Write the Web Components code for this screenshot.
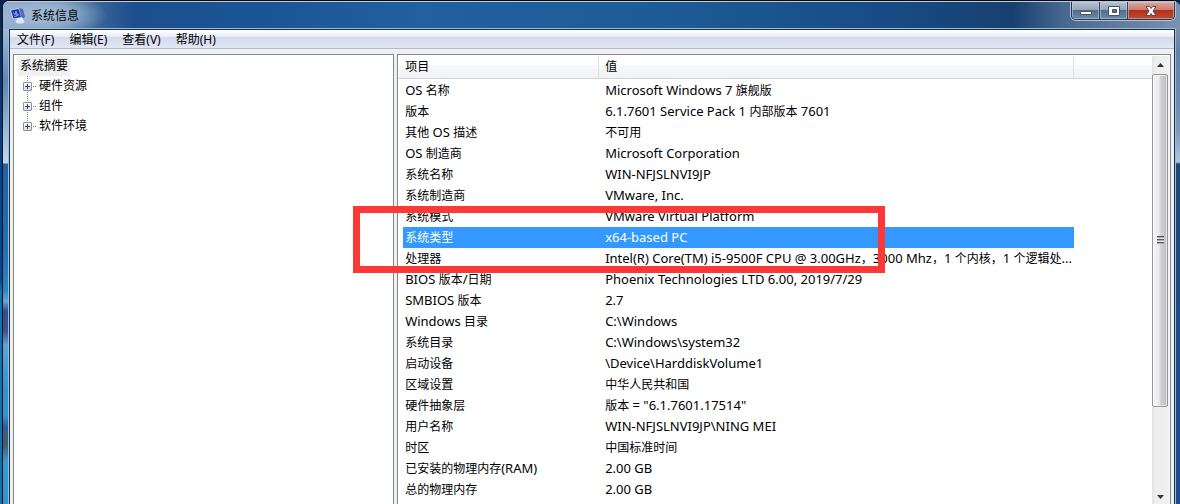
<!DOCTYPE html>
<html lang="zh-CN">
<head>
<meta charset="utf-8">
<title>系统信息</title>
<style>
  html, body {
    height: 100%;
  }

  body {
    margin: 0;
    overflow: hidden;
    position: relative;
    color: #000;
    font: 12px/20px "Noto Sans", "Noto Sans CJK SC", sans-serif;
    background: linear-gradient(#0a2248 0, #0b3d78 120px, #04488c 200px, #04488c 280px, #1273a4 290px, #1273a4 100%);
  }
</style>
</head>
<body>
<app-window>
  <span slot="title">系统信息</span>
  <menu-bar slot="menu">
    <menu-entry>文件(F)</menu-entry>
    <menu-entry>编辑(E)</menu-entry>
    <menu-entry>查看(V)</menu-entry>
    <menu-entry>帮助(H)</menu-entry>
  </menu-bar>
  <tree-view>
    <span slot="root">系统摘要</span>
    <tree-item>硬件资源</tree-item>
    <tree-item>组件</tree-item>
    <tree-item>软件环境</tree-item>
  </tree-view>
  <info-list></info-list>
</app-window>
<mark-box></mark-box>

<script>
const rows = [
  ['OS 名称', 'Microsoft Windows 7 旗舰版'],
  ['版本', '6.1.7601 Service Pack 1 内部版本 7601'],
  ['其他 OS 描述', '不可用'],
  ['OS 制造商', 'Microsoft Corporation'],
  ['系统名称', 'WIN-NFJSLNVI9JP'],
  ['系统制造商', 'VMware, Inc.'],
  ['系统模式', 'VMware Virtual Platform'],
  ['系统类型', 'x64-based PC'],
  ['处理器', 'Intel(R) Core(TM) i5-9500F CPU @ 3.00GHz，3000 Mhz，1 个内核，1 个逻辑处...'],
  ['BIOS 版本/日期', 'Phoenix Technologies LTD 6.00, 2019/7/29'],
  ['SMBIOS 版本', '2.7'],
  ['Windows 目录', 'C:\\Windows'],
  ['系统目录', 'C:\\Windows\\system32'],
  ['启动设备', '\\Device\\HarddiskVolume1'],
  ['区域设置', '中华人民共和国'],
  ['硬件抽象层', '版本 = "6.1.7601.17514"'],
  ['用户名称', 'WIN-NFJSLNVI9JP\\NING MEI'],
  ['时区', '中国标准时间'],
  ['已安装的物理内存(RAM)', '2.00 GB'],
  ['总的物理内存', '2.00 GB'],
];
const selectedRow = 7;

class AppWindow extends HTMLElement {
  constructor() {
    super();
    this.attachShadow({ mode: 'open' });
    this.shadowRoot.innerHTML = /* html */`
    <style>
    :host {
      display: flex;
      flex-direction: column;
      box-sizing: border-box;
      height: 100%;
      margin-left: 2px;
      border-top: 1px solid #05070f;
      border-left: 1px solid #0a1424;
      border-radius: 7px 7px 0 0;
      overflow: hidden;
      background:
        linear-gradient(#b8cfe4 0, #8fb0d0 40px, #5d86b4 80px, #8fb0d2 120px, #c3d8ec 162px, #2062a4 163px,
          #2272b0 250px, #2a86c4 290px, #66a8dc 300px, #2d4f94 310px, #434f8c 330px, #5aa4da 344px,
          #3094cc 390px, #2f96cf 415px, #2f5fa0 425px, #455a68 443px, #3a9ace 460px, #2f96cf) left / 50% 100% no-repeat,
        linear-gradient(#8ba0b8 0, #6483ab 50px, #7089b0 100px, #7f98bd 130px, #b5c5df 161px, #1b4a80 163px, #1a4f8c) right / 50% 100% no-repeat;
    }

    header {
      flex: none;
      display: flex;
      align-items: center;
      box-sizing: border-box;
      height: 28px;
      padding-left: 7px;
      border-top: 1px solid #bdd0e2;
      background:
        radial-gradient(ellipse 60px 24px at 44px 13px, #a9c1dc 0, #a9c1dca0 50%, #a9c1dc00 100%),
        linear-gradient(90deg, #8faccc 0, #54799f 60px, #1d4f8e 130px, #1b5394 240px, #22609e 420px, #1e5c97 650px,
          #184a84 900px, #17406f 1010px, #47688f 1060px, #7c91ac 1177px);
    }

    header svg {
      width: 16px;
      height: 16px;
      margin-right: 5px;
    }

    .buttons {
      display: flex;
      align-self: flex-start;
      margin-left: auto;
      margin-right: 5px;
      border: 1px solid #243850;
      border-top: 0;
      border-radius: 0 0 5px 5px;
      box-shadow: 0 0 0 1px #b3c3d5;
      overflow: hidden;
    }

    button {
      display: flex;
      align-items: center;
      justify-content: center;
      box-sizing: border-box;
      width: 28px;
      height: 17px;
      padding: 0;
      border: 0;
      border-right: 1px solid #30445e;
      background: linear-gradient(#b4c1d1, #92a4ba 48%, #536c8c 50%, #6f8aa8);
      box-shadow: inset 0 0 0 1px #c9d4e080;
    }

    .close {
      width: 46px;
      border-right: 0;
      background: linear-gradient(#dfa79c, #cd7868 48%, #b0311b 50%, #c44c30);
    }

    button svg {
      width: 14px;
      height: 12px;
      margin: 0;
    }

    .client {
      flex: 1;
      min-height: 0;
      display: flex;
      flex-direction: column;
      margin: 0 5px 0 6px;
      border: 1px solid #1a2d42;
      border-bottom: 0;
      outline: 1px solid #9dbdd8;
      background: #f0f0f0;
    }

    .panes {
      flex: 1;
      min-height: 0;
      display: grid;
      grid-template-columns: 33fr 67fr;
      grid-template-rows: 100%;
      gap: 3px;
      padding: 5px 3px 0;
      box-sizing: border-box;
    }
    </style>
    <header>
      <svg viewBox="0 0 16 16" aria-hidden="true">
        <path d="M0 2 9 0l3 9.500L3 11.500z" fill="#c9d5ec"/>
        <path d="M1 2.500 8.500 1l2.500 8L3.500 10.500z" fill="#1c2fa4"/>
        <path d="m3 4 2 3 1-4 1.500 5 1.500-2M4 8l2 1 1-4" fill="none" stroke="#7f9df0"/>
        <path d="m9 0 4 1 2 8-3 2z" fill="#5069c4"/>
        <path d="m6.500 11 6-1.500.500 3-5 .500z" fill="#f3f6fa"/>
        <ellipse cx="10" cy="13.500" rx="4.500" ry="2" fill="#dfe5ed"/>
      </svg>
      <slot name="title"></slot>
      <div class="buttons">
        <button aria-label="最小化"><svg viewBox="0 0 14 12"><path d="M1.500 6.500h11v3h-11z" fill="#fff" stroke="#47536a"/></svg></button>
        <button aria-label="最大化"><svg viewBox="0 0 14 12"><path d="M1.500 1.500h11v9h-11zM5.500 4.500v3h4v-3z" fill="#fff" fill-rule="evenodd" stroke="#47536a"/></svg></button>
        <button class="close" aria-label="关闭"><svg viewBox="0 0 14 12"><path d="M2 1.500h3.500L7 3.500l1.500-2H12L9 6l3 4.500H8.500L7 8.500l-1.500 2H2L5 6z" fill="#fff" stroke="#59434f"/></svg></button>
      </div>
    </header>
    <div class="client">
      <slot name="menu"></slot>
      <div class="panes"><slot></slot></div>
    </div>`;
  }
}

class MenuBar extends HTMLElement {
  constructor() {
    super();
    this.attachShadow({ mode: 'open' });
    this.shadowRoot.innerHTML = /* html */`
    <style>
    :host {
      flex: none;
      display: flex;
      gap: 15px;
      height: 18px;
      padding-left: 7px;
      border-bottom: 1px solid #b1bad2;
      background: linear-gradient(#fff, #e8ecf5 38%, #d4daeb 40%, #e1e7f5);
    }
    </style>
    <slot></slot>`;
  }
}

class MenuEntry extends HTMLElement {
  constructor() {
    super();
    this.attachShadow({ mode: 'open' });
    this.shadowRoot.innerHTML = /* html */`
    <style>
    :host { display: block; }

    button {
      display: block;
      padding: 0;
      border: 0;
      background: none;
      color: inherit;
      font: inherit;
      line-height: 20px;
    }
    </style>
    <button><slot></slot></button>`;
  }
}

class TreeView extends HTMLElement {
  constructor() {
    super();
    this.attachShadow({ mode: 'open' });
    this.shadowRoot.innerHTML = /* html */`
    <style>
    :host {
      display: block;
      min-width: 0;
      padding: 1px 4px 0;
      border: 1px solid #828790;
      border-bottom: 0;
      background: #fff;
    }

    .root {
      display: inline-block;
      padding: 0 2px;
      background: #f0f0f0;
      vertical-align: top;
    }
    </style>
    <div><span class="root"><slot name="root"></slot></span></div>
    <slot></slot>`;
  }
}

class TreeItem extends HTMLElement {
  constructor() {
    super();
    this.attachShadow({ mode: 'open' });
    this.shadowRoot.innerHTML = /* html */`
    <style>
    :host {
      display: flex;
      align-items: center;
      height: 20px;
      padding-left: 5px;
      background: repeating-linear-gradient(#808080 0 1px, #fff 1px 2px) 9px 0 / 1px 100% no-repeat;
    }

    :host(:last-of-type) { background-size: 1px 10px; }

    button {
      width: 9px;
      height: 9px;
      padding: 0;
      border: 1px solid #919191;
      border-radius: 1px;
      background:
        linear-gradient(#2b3f8c, #2b3f8c) center / 5px 1px no-repeat,
        linear-gradient(#2b3f8c, #2b3f8c) center / 1px 5px no-repeat,
        linear-gradient(#fff, #dcdcdc);
    }

    i {
      width: 4px;
      height: 1px;
      margin: 0 2px 0 1px;
      background: repeating-linear-gradient(90deg, #808080 0 1px, #fff 1px 2px);
    }
    </style>
    <button aria-label="展开"></button><i></i><slot></slot>`;
  }
}

class InfoList extends HTMLElement {
  constructor() {
    super();
    this.attachShadow({ mode: 'open' });
  }

  static get styles() {
    return /* css */`
    :host {
      display: flex;
      min-width: 0;
      padding: 1px 1px 0;
      border: 1px solid #828790;
      border-bottom: 0;
      background: #fff;
    }

    .view {
      flex: 1;
      min-width: 0;
      overflow: hidden;
    }

    table {
      width: 100%;
      table-layout: fixed;
      border-collapse: separate;
      border-spacing: 0;
    }

    th, td {
      box-sizing: border-box;
      padding: 0 0 0 6px;
      text-align: left;
      font-weight: normal;
      white-space: nowrap;
    }

    th {
      height: 23px;
      border-bottom: 1px solid #d5d5d5;
      border-right: 1px solid #dedfe1;
      background: linear-gradient(#fff 40%, #f7f8fa 42%, #f1f2f4);
    }

    th:last-child { border-right: 0; }
    th:nth-child(1) { width: 200px; }
    th:nth-child(2) { width: 475px; }

    tbody::before {
      content: "";
      display: block;
      height: 1px;
    }

    td {
      height: 21px;
      line-height: 20px;
    }

    td:first-child {
      padding-left: 2px;
      border-left: 4px solid transparent;
      background-clip: padding-box;
    }

    .latin {
      font-size: 13px;
      line-height: 1;
    }

    .selected td:not(:last-child) {
      background-color: #3399ff;
      color: #fff;
    }
    `;
  }

  // latin runs are set one size up from the hanzi
  static fillCell(cell, text) {
    for (const part of text.match(/[\x20-\x7e]+|[^\x20-\x7e]+/g)) {
      if (part.charCodeAt(0) > 0x7e) {
        cell.append(part);
        continue;
      }
      const span = document.createElement('span');
      span.className = 'latin';
      span.textContent = part;
      cell.append(span);
    }
  }

  connectedCallback() {
    this.shadowRoot.innerHTML = /* html */`
    <style>${InfoList.styles}</style>
    <div class="view">
      <table>
        <thead><tr><th>项目</th><th>值</th><th></th></tr></thead>
        <tbody></tbody>
      </table>
    </div>
    <scroll-bar></scroll-bar>`;
    const body = this.shadowRoot.querySelector('tbody');
    rows.forEach((row, i) => {
      const tr = body.insertRow();
      if (i === selectedRow) tr.className = 'selected';
      InfoList.fillCell(tr.insertCell(), row[0]);
      InfoList.fillCell(tr.insertCell(), row[1]);
      tr.insertCell();
    });
  }
}

class ScrollBar extends HTMLElement {
  constructor() {
    super();
    this.attachShadow({ mode: 'open' });
    this.shadowRoot.innerHTML = /* html */`
    <style>
    :host {
      flex: none;
      display: flex;
      flex-direction: column;
      width: 17px;
      background: linear-gradient(90deg, #e3e3e3, #eee 20%, #f0f0f0);
    }

    button {
      flex: none;
      height: 18px;
      padding: 0;
      border: 0;
      background: none;
    }

    button:last-child { height: 14px; }

    svg { display: block; margin: auto; }

    .track {
      flex: 1;
      min-height: 0;
    }

    .thumb {
      display: flex;
      align-items: center;
      justify-content: center;
      box-sizing: border-box;
      height: 80%;
      margin: 0 1px 0 0;
      border: 1px solid #979797;
      border-radius: 2px;
      background: linear-gradient(90deg, #f6f6f6, #e9e9eb 45%, #d0d1d4 55%, #bcbdc2);
      box-shadow: inset 0 0 0 1px #ffffff90;
    }

    .thumb::after {
      content: "";
      width: 7px;
      height: 8px;
      background: repeating-linear-gradient(#555 0 1px, #aaa 1px 2px, #eee 2px 3px);
    }
    </style>
    <button aria-label="向上"><svg width="7" height="4"><path d="M0 4 3.500 0 7 4z" fill="#333"/></svg></button>
    <div class="track"><div class="thumb"></div></div>
    <button aria-label="向下"><svg width="7" height="4"><path d="M0 0h7L3.500 4z" fill="#333"/></svg></button>`;
  }
}

// red frame laid over the rows around the system type
class MarkBox extends HTMLElement {
  constructor() {
    super();
    this.attachShadow({ mode: 'open' });
    this.shadowRoot.innerHTML = /* html */`
    <style>
    :host {
      position: absolute;
      left: 353px;
      top: 206px;
      box-sizing: border-box;
      width: 532px;
      height: 67px;
      border: 7px solid #fd3838;
      pointer-events: none;
    }
    </style>`;
  }
}

customElements.define('app-window', AppWindow);
customElements.define('menu-bar', MenuBar);
customElements.define('menu-entry', MenuEntry);
customElements.define('tree-view', TreeView);
customElements.define('tree-item', TreeItem);
customElements.define('scroll-bar', ScrollBar);
customElements.define('info-list', InfoList);
customElements.define('mark-box', MarkBox);
</script>
</body>
</html>
